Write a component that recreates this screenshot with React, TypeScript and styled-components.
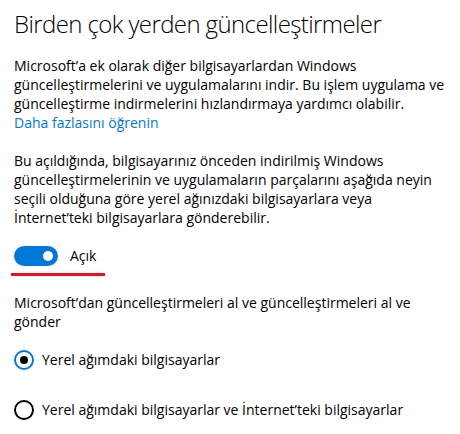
import React from 'react';
import styled, { createGlobalStyle } from 'styled-components';

const GlobalStyle = createGlobalStyle`
	body {
		margin: 0;
		background: #fff;
		font-family: 'Open Sans', 'Noto Sans', sans-serif;
		color: #000;
	}
`;

const Page = styled('div')({
	width: '460px',
	height: '434px',
	boxSizing: 'border-box',
	padding: '8px 14px 0',
	overflow: 'hidden',
});

const Title = styled('h2')({
	margin: 0,
	fontSize: '24px',
	fontWeight: 300,
	lineHeight: '31px',
	letterSpacing: '-0.6px',
});

const Paragraph = styled('p')<{ $top: number }>(({ $top }) => ({
	margin: `${$top}px 0 0`,
	fontSize: '14px',
	lineHeight: '19px',
}));

const Link = styled('a')({
	display: 'block',
	color: '#0078d7',
	textDecoration: 'none',
	cursor: 'pointer',
});

const ToggleRow = styled('div')({
	display: 'flex',
	alignItems: 'center',
	gap: '12px',
	marginTop: '19px',
	height: '20px',
});

const Toggle = styled('button')<{ $on: boolean }>(({ $on }) => ({
	position: 'relative',
	width: '44px',
	height: '20px',
	padding: 0,
	border: $on ? 'none' : '2px solid #000',
	borderRadius: '10px',
	background: $on ? '#0078d7' : 'transparent',
	cursor: 'pointer',
	'&::after': {
		content: '""',
		position: 'absolute',
		top: '5px',
		left: $on ? '29px' : '5px',
		width: '10px',
		height: '10px',
		borderRadius: '50%',
		background: $on ? '#fff' : '#000',
	},
}));

const ToggleLabel = styled('span')({
	fontSize: '14px',
	lineHeight: '20px',
});

const Underline = styled('div')({
	width: '94px',
	height: '3px',
	marginTop: '7px',
	marginLeft: '-3px',
	background: '#e81123',
});

const RadioGroup = styled('div')({
	display: 'flex',
	flexDirection: 'column',
	gap: '30px',
	marginTop: '19px',
});

const RadioRow = styled('label')({
	display: 'flex',
	alignItems: 'center',
	gap: '8px',
	height: '20px',
	fontSize: '14px',
	lineHeight: '20px',
	cursor: 'pointer',
});

const RadioCircle = styled('span')<{ $checked: boolean }>(({ $checked }) => ({
	position: 'relative',
	flex: 'none',
	width: '20px',
	height: '20px',
	boxSizing: 'border-box',
	borderRadius: '50%',
	border: `2px solid ${$checked ? '#0078d7' : '#000'}`,
	'&::after': {
		content: '""',
		display: $checked ? 'block' : 'none',
		position: 'absolute',
		top: '4px',
		left: '4px',
		width: '8px',
		height: '8px',
		borderRadius: '50%',
		background: '#000',
	},
}));

const OPTIONS = [
	'Yerel ağımdaki bilgisayarlar',
	'Yerel ağımdaki bilgisayarlar ve İnternet’teki bilgisayarlar',
];

export default function App() {
	const [on, setOn] = React.useState(true);
	const [selected, setSelected] = React.useState(0);
	return (
		<>
			<GlobalStyle />
			<Page>
				<Title>Birden çok yerden güncelleştirmeler</Title>
				<Paragraph $top={17}>
					Microsoft’a ek olarak diğer bilgisayarlardan Windows güncelleştirmelerini ve
					uygulamalarını indir. Bu işlem uygulama ve güncelleştirme indirmelerini
					hızlandırmaya yardımcı olabilir.
					<Link>Daha fazlasını öğrenin</Link>
				</Paragraph>
				<Paragraph $top={19}>
					Bu açıldığında, bilgisayarınız önceden indirilmiş Windows güncelleştirmelerinin ve
					uygulamaların parçalarını aşağıda neyin seçili olduğuna göre yerel ağınızdaki
					bilgisayarlara veya İnternet’teki bilgisayarlara gönderebilir.
				</Paragraph>
				<ToggleRow>
					<Toggle $on={on} onClick={() => setOn(!on)} aria-pressed={on} />
					<ToggleLabel>{on ? 'Açık' : 'Kapalı'}</ToggleLabel>
				</ToggleRow>
				<Underline />
				<Paragraph $top={17}>
					Microsoft’dan güncelleştirmeleri al ve güncelleştirmeleri al ve gönder
				</Paragraph>
				<RadioGroup>
					{OPTIONS.map((option, i) => (
						<RadioRow key={option} onClick={() => setSelected(i)}>
							<RadioCircle $checked={selected === i} />
							{option}
						</RadioRow>
					))}
				</RadioGroup>
			</Page>
		</>
	);
}
